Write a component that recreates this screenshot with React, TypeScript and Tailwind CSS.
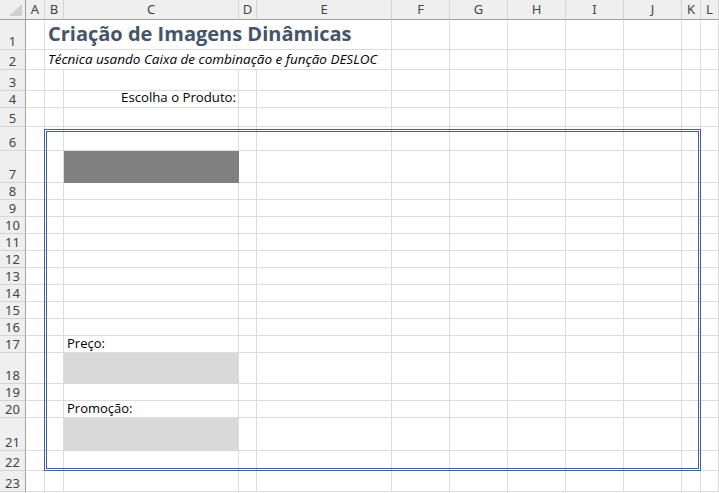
import React from 'react';

const letters = ['A', 'B', 'C', 'D', 'E', 'F', 'G', 'H', 'I', 'J', 'K', 'L'];
const rowCount = 23;

const gridTemplate =
  'grid grid-cols-[26px_19px_19px_175px_18px_135px_repeat(5,58px)_19px_18px] grid-rows-[20px_30px_20px_21px_17px_19px_24px_32px_repeat(9,17px)_17px_31px_17px_17px_33px_20px_21px]';

// cells whose right gridline is hidden by overflowing text
const noRight = new Set(['1B', '1C', '1D', '2B', '2C', '2D']);

const fills: Record<string, string> = {
  '7C': 'bg-[#808080] border-[#808080]',
  '18C': 'bg-[#d9d9d9] border-[#d9d9d9]',
  '21C': 'bg-[#d9d9d9] border-[#d9d9d9]',
};

function CellContent({ id }: { id: string }) {
  if (id === '1B')
    return (
      <span className="relative z-10 whitespace-nowrap pl-[3px] text-[20px] leading-none font-bold text-[#44546a] pb-[5px]">
        Criação de Imagens Dinâmicas
      </span>
    );
  if (id === '2B')
    return (
      <span className="relative z-10 whitespace-nowrap pl-[3px] text-[13.5px] leading-none italic text-black pb-[3px]">
        Técnica usando Caixa de combinação e função DESLOC
      </span>
    );
  if (id === '4C')
    return (
      <span className="w-full text-right whitespace-nowrap pr-[2px] text-[13.2px] leading-none text-black pb-[3px]">
        Escolha o Produto:
      </span>
    );
  if (id === '17C')
    return <span className="pl-[3px] text-[13px] leading-none text-black pb-[2px]">Preço:</span>;
  if (id === '20C')
    return <span className="pl-[3px] text-[13px] leading-none text-black pb-[2px]">Promoção:</span>;
  return null;
}

export default function App() {
  const rows = Array.from({ length: rowCount }, (_, i) => i + 1);

  return (
    <div className="grid h-[493px] w-[719px] overflow-hidden bg-white font-['Open_Sans',sans-serif]">
      <div className={`[grid-area:1/1] ${gridTemplate}`}>
        {/* corner */}
        <div className="relative border-r border-b border-[#a0a0a0] bg-[#efefef]">
          <svg className="absolute right-[3px] bottom-[3px]" width="13" height="12" viewBox="0 0 13 12">
            <polygon points="13,0 13,12 0,12" fill="#d0d0d0" />
          </svg>
        </div>
        {letters.map((l) => (
          <div
            key={l}
            className="flex items-center justify-center border-r border-r-[#d4d4d4] border-b border-b-[#a0a0a0] bg-[#efefef] text-[13px] text-[#444] font-['Noto_Sans',sans-serif]"
          >
            {l}
          </div>
        ))}

        {rows.map((r) => (
          <React.Fragment key={r}>
            <div className="flex items-end justify-center border-r border-r-[#a0a0a0] border-b border-b-[#d4d4d4] bg-[#efefef] pb-[1px] text-[13px] leading-none text-[#444] font-['Noto_Sans',sans-serif]">
              {r}
            </div>
            {letters.map((l) => {
              const id = `${r}${l}`;
              const fill = fills[id] ?? 'border-[#dcdcdc]';
              return (
                <div
                  key={id}
                  className={`flex items-end border-b ${noRight.has(id) ? '' : 'border-r'} ${fill}`}
                >
                  <CellContent id={id} />
                </div>
              );
            })}
          </React.Fragment>
        ))}
      </div>

      {/* double border around B6:K22, layered over the sheet */}
      <div className={`pointer-events-none [grid-area:1/1] ${gridTemplate}`}>
        <div className="col-start-3 col-end-13 row-start-7 row-end-24 -ml-px mt-[2px] border-[3px] border-double border-[#3d5f9c]" />
      </div>
    </div>
  );
}
